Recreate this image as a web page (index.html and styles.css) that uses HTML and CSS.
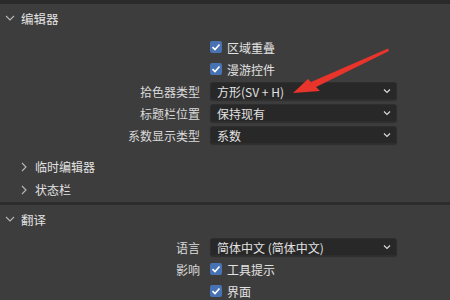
FILE: index.html
```html
<!DOCTYPE html>
<html lang="zh-CN">

<head>
    <meta charset="UTF-8">
    <meta name="viewport" content="width=device-width, initial-scale=1.0">
    <title>偏好设置</title>
    <link rel="stylesheet" href="styles.css">
</head>

<body>
    <div class="topbar"></div>

    <div class="panel">
        <div class="panel-head">
            <svg class="chev" viewBox="0 0 10 10"><path d="M1 3 L5 7 L9 3" /></svg>
            <span>编辑器</span>
        </div>
        <div class="rows">
            <div class="row">
                <div class="label"></div>
                <label class="check"><span class="box"><svg viewBox="0 0 12 12"><path d="M2.5 6.2 L5 8.6 L9.5 3.4" /></svg></span>区域重叠</label>
            </div>
            <div class="row">
                <div class="label"></div>
                <label class="check"><span class="box"><svg viewBox="0 0 12 12"><path d="M2.5 6.2 L5 8.6 L9.5 3.4" /></svg></span>漫游控件</label>
            </div>
            <div class="row">
                <div class="label">拾色器类型</div>
                <div class="select"><span>方形(SV + H)</span><svg class="drop" viewBox="0 0 10 10"><path d="M2 3.5 L5 6.5 L8 3.5" /></svg></div>
            </div>
            <div class="row">
                <div class="label">标题栏位置</div>
                <div class="select"><span>保持现有</span><svg class="drop" viewBox="0 0 10 10"><path d="M2 3.5 L5 6.5 L8 3.5" /></svg></div>
            </div>
            <div class="row">
                <div class="label">系数显示类型</div>
                <div class="select"><span>系数</span><svg class="drop" viewBox="0 0 10 10"><path d="M2 3.5 L5 6.5 L8 3.5" /></svg></div>
            </div>
        </div>
        <div class="subs">
            <div class="sub">
                <svg class="chev" viewBox="0 0 10 10"><path d="M3 1 L7 5 L3 9" /></svg>
                <span>临时编辑器</span>
            </div>
            <div class="sub">
                <svg class="chev" viewBox="0 0 10 10"><path d="M3 1 L7 5 L3 9" /></svg>
                <span>状态栏</span>
            </div>
        </div>
    </div>

    <div class="divider"></div>

    <div class="panel">
        <div class="panel-head">
            <svg class="chev" viewBox="0 0 10 10"><path d="M1 3 L5 7 L9 3" /></svg>
            <span>翻译</span>
        </div>
        <div class="rows rows-lang">
            <div class="row">
                <div class="label">语言</div>
                <div class="select"><span>简体中文 (简体中文)</span><svg class="drop" viewBox="0 0 10 10"><path d="M2 3.5 L5 6.5 L8 3.5" /></svg></div>
            </div>
            <div class="row">
                <div class="label">影响</div>
                <label class="check"><span class="box"><svg viewBox="0 0 12 12"><path d="M2.5 6.2 L5 8.6 L9.5 3.4" /></svg></span>工具提示</label>
            </div>
            <div class="row">
                <div class="label"></div>
                <label class="check"><span class="box"><svg viewBox="0 0 12 12"><path d="M2.5 6.2 L5 8.6 L9.5 3.4" /></svg></span>界面</label>
            </div>
        </div>
    </div>

    <!-- annotation arrow drawn over the panel -->
    <svg class="arrow" viewBox="0 0 450 300">
        <path d="M388 48.5 L311 82 L314 88 L389 51 Z" />
        <path d="M293 93 L308 79 L313 84 L320 91 Z" />
    </svg>
</body>

</html>
```

FILE: styles.css
```css
body {
    margin: 0;
    width: 450px;
    height: 300px;
    overflow: hidden;
    background-color: #3d3d3d;
    color: #e2e2e2;
    font-family: "Noto Sans CJK SC", "Noto Sans", sans-serif;
    font-size: 12px;
    position: relative;
}

.topbar {
    height: 4px;
    background-color: #2a2a2a;
}

.divider {
    height: 3px;
    background-color: #2c2c2c;
}

.panel-head {
    height: 28px;
    display: flex;
    align-items: center;
    padding-left: 5px;
    gap: 6px;
    font-size: 12.5px;
}

.chev {
    width: 10px;
    height: 10px;
    fill: none;
    stroke: #b8b8b8;
    stroke-width: 1.1;
}

.rows {
    padding-top: 4px;
    display: flex;
    flex-direction: column;
}

.rows-lang {
    padding-top: 3px;
}

.row {
    height: 22px;
    display: flex;
    align-items: center;
}

.label {
    width: 200px;
    text-align: right;
    padding-right: 10px;
    box-sizing: content-box;
    color: #dadada;
}

.check {
    display: flex;
    align-items: center;
    gap: 5px;
}

.box {
    width: 12px;
    height: 12px;
    border-radius: 2px;
    background-color: #4772b3;
    display: flex;
}

.box svg {
    width: 12px;
    height: 12px;
    fill: none;
    stroke: #ffffff;
    stroke-width: 1.6;
}

.select {
    width: 187px;
    height: 18px;
    box-sizing: border-box;
    background-color: #282828;
    border: 1px solid #2e2e2e;
    border-radius: 3px;
    box-shadow: 0 1px 1px rgba(0, 0, 0, 0.25);
    display: flex;
    align-items: center;
    justify-content: space-between;
    padding: 0 4px 0 6px;
}

.drop {
    width: 10px;
    height: 10px;
    fill: none;
    stroke: #d8d8d8;
    stroke-width: 1.2;
}

.subs {
    padding-top: 9px;
    padding-bottom: 1px;
}

.sub {
    height: 23px;
    display: flex;
    align-items: center;
    gap: 6px;
    padding-left: 19px;
}

.arrow {
    position: absolute;
    left: 0;
    top: 0;
    width: 450px;
    height: 300px;
    fill: #e8342b;
    pointer-events: none;
}
```
